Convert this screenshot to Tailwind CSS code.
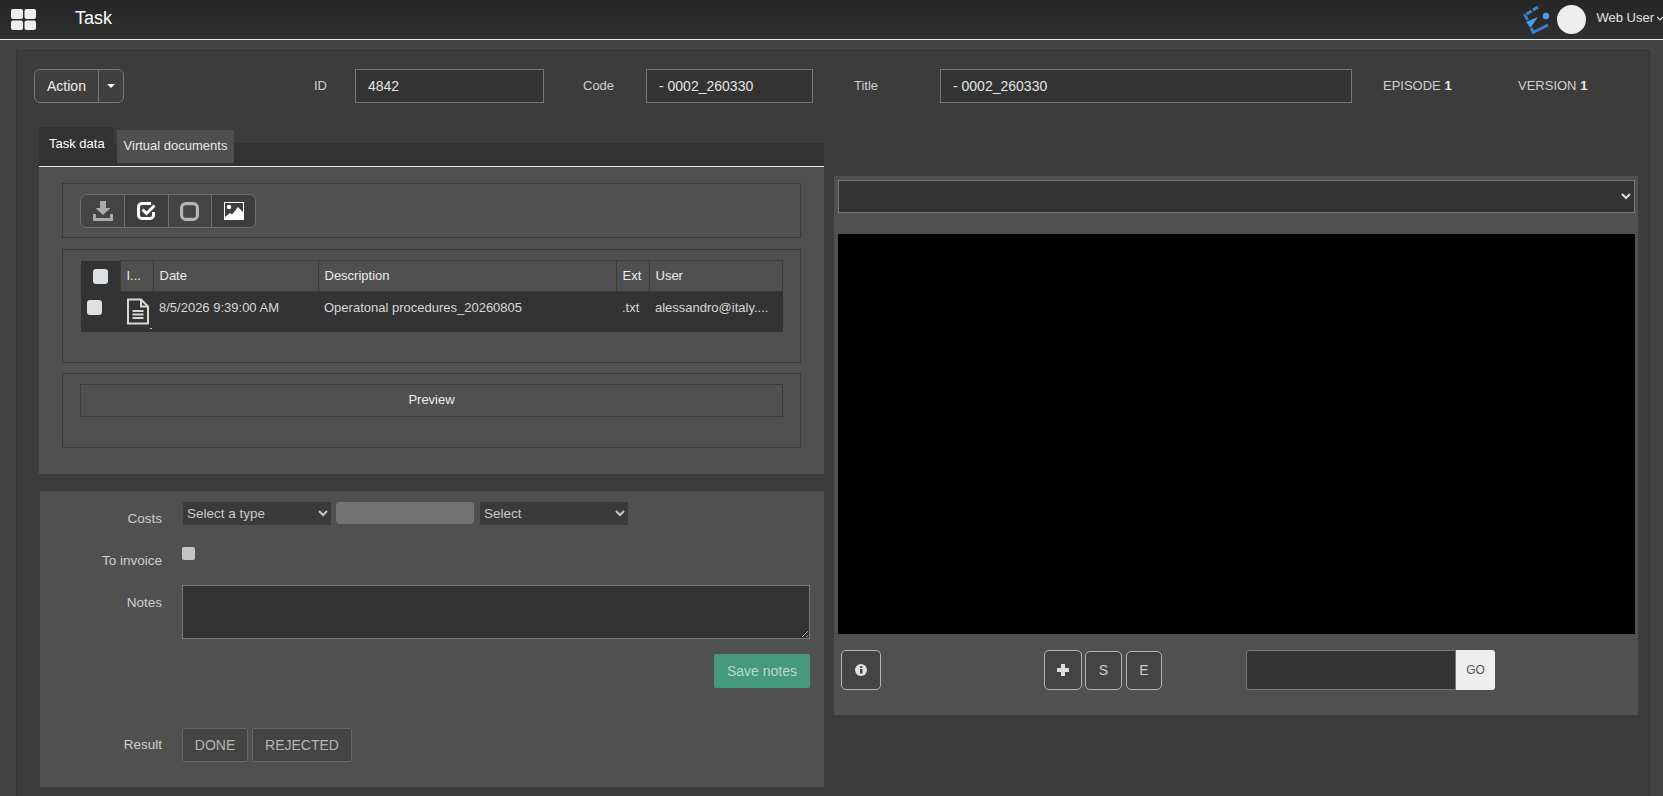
<!DOCTYPE html>
<html lang="en">
<head>
    <meta charset="UTF-8">
    <meta name="viewport" content="width=device-width, initial-scale=1.0">
    <title>Task</title>
    <script src="https://cdn.jsdelivr.net/npm/@tailwindcss/browser@4"></script>
</head>
<body class="w-[1663px] h-[796px] overflow-hidden bg-[#434343] font-['Liberation_Sans',Arial,sans-serif] text-[14px] text-[#dcdcdc]">
    <!-- top bar -->
    <header class="h-[40px] flex items-center bg-gradient-to-b from-[#262626] to-[#303030] border-b border-[#e8e8e8] relative">
        <svg class="ml-[11px] w-[25px] h-[21px]" viewBox="0 0 25 21" fill="#eeeeee">
            <rect x="0" y="0" width="12" height="10" rx="2"/>
            <rect x="13.500" y="0" width="11.500" height="10" rx="2"/>
            <rect x="0" y="11.500" width="12" height="9.500" rx="2"/>
            <rect x="13.500" y="11.500" width="11.500" height="9.500" rx="2"/>
        </svg>
        <span class="ml-[39px] mt-[-2px] text-[18px] text-white">Task</span>
        <div class="ml-auto flex items-center whitespace-nowrap">
            <svg class="w-[28px] h-[31px] mt-[-1px]" viewBox="0 0 28 31">
                <path d="M15 3 L2 11 L8 23" fill="none" stroke="#3f7fc4" stroke-width="3" stroke-dasharray="6 1.500"/>
                <path d="M9 29 L25 21" fill="none" stroke="#3f7fc4" stroke-width="3"/>
                <path d="M8 24 L11 29" fill="none" stroke="#3f7fc4" stroke-width="3"/>
                <path d="M3 18 L15 13 L8 23 Z" fill="#4a9fe8"/>
                <circle cx="23" cy="12" r="3.200" fill="#4a9fe8"/>
            </svg>
            <div class="ml-[6px] w-[29px] h-[29px] rounded-full bg-[#eeeeee]"></div>
            <span class="ml-[10px] mt-[-4px] text-[13px] text-[#e2e2e2]">Web User</span>
            <svg class="ml-[3px] mt-[-3px] w-[6px] h-[5px]" viewBox="0 0 6 5"><path d="M0 1 L3 4 L6 1" fill="none" stroke="#dddddd" stroke-width="1.200"/></svg>
        </div>
    </header>

    <!-- page frame -->
    <main class="mt-[10px] ml-[16px] w-[1634px] h-[760px] bg-[#3c3c3c] border border-[#333333] pl-[17px] pt-[18px]">
        <!-- title row -->
        <div class="flex items-center h-[34px] text-[13px] text-[#cfcfcf]">
            <div class="w-[90px] h-[34px] flex border border-[#777777] rounded-[6px] bg-[#3f3f3f] text-[#f0f0f0]">
                <span class="w-[63px] flex items-center justify-center text-[14px]">Action</span>
                <span class="flex-1 border-l border-[#777777] flex items-center justify-center">
                    <span class="border-x-[4px] border-x-transparent border-t-[4px] border-t-white"></span>
                </span>
            </div>
            <span class="ml-[190px] w-[41px]">ID</span>
            <input class="w-[189px] h-[34px] bg-[#333333] border border-[#777777] px-[12px] text-[14px] text-[#e4e4e4]" value="4842">
            <span class="ml-[39px] w-[63px]">Code</span>
            <input class="w-[167px] h-[34px] bg-[#333333] border border-[#777777] px-[12px] text-[14px] text-[#e4e4e4]" value="- 0002_260330">
            <span class="ml-[41px] w-[86px]">Title</span>
            <input class="w-[412px] h-[34px] bg-[#333333] border border-[#777777] px-[12px] text-[14px] text-[#e4e4e4]" value="- 0002_260330">
            <span class="ml-[31px] w-[135px]">EPISODE <b class="text-[#e8e8e8]">1</b></span>
            <span>VERSION <b class="text-[#e8e8e8]">1</b></span>
        </div>

        <div class="flex mt-[24px]">
            <!-- left column -->
            <div class="w-[790px] flex flex-col items-end">
                <div class="w-[785px] relative">
                    <div class="h-[40px] flex items-end bg-gradient-to-b from-transparent from-[42%] to-[#333333] to-[42%] border-b border-[#e8e8e8]">
                        <div class="w-[75px] h-[39px] bg-[#333333] rounded-t-[3px] pl-[10px] pt-[6px] text-[13px] leading-[22px] text-white">Task data</div>
                        <div class="ml-[3px] mb-[3px] w-[117px] h-[33px] bg-[#4f4f4f] pb-[2px] flex items-center justify-center text-[13px] text-[#e8e8e8]">Virtual documents</div>
                    </div>
                    <section class="h-[307px] bg-[#505050] pt-[16px] pl-[23px]">
                        <fieldset class="w-[739px] h-[55px] border border-[#3a3a3a] pl-[17px] pt-[10px]">
                            <div class="w-[176px] h-[34px] flex border border-[#6f6f6f] rounded-[7px] bg-[#444444] overflow-hidden">
                                <span class="w-[43px] flex items-center justify-center">
                                    <svg class="w-[20px] h-[20px]" viewBox="0 0 20 20" fill="#aaaaaa"><path d="M7 0h6v7h4.500L10 14 2.500 7H7z"/><path d="M0 13h3v4h14v-4h3v7H0z"/></svg>
                                </span>
                                <span class="w-[44px] flex items-center justify-center border-l border-[#6f6f6f] bg-[#3d3d3d]">
                                    <svg class="w-[20px] h-[18px]" viewBox="0 0 20 18" fill="none"><path d="M14 1.500H5a3.500 3.500 0 0 0-3.500 3.500v8A3.500 3.500 0 0 0 5 16.500h8a3.500 3.500 0 0 0 3.500-3.500v-3" stroke="#ffffff" stroke-width="3"/><path d="M5.500 7.500l4 4 8-8" stroke="#ffffff" stroke-width="3"/></svg>
                                </span>
                                <span class="w-[43px] pr-[2px] flex items-center justify-center border-l border-[#6f6f6f]">
                                    <svg class="w-[19px] h-[19px]" viewBox="0 0 18 18" fill="none"><rect x="1.500" y="1.500" width="15" height="15" rx="4" stroke="#b5b5b5" stroke-width="3"/></svg>
                                </span>
                                <span class="flex-1 flex items-center justify-center border-l border-[#6f6f6f] bg-[#3d3d3d]">
                                    <svg class="w-[20px] h-[18px]" viewBox="0 0 20 18"><rect width="20" height="18" fill="#ffffff"/><rect x="1" y="1" width="18" height="16" fill="#3d3d3d"/><circle cx="5" cy="5" r="2.200" fill="#ffffff"/><path d="M1 15l5-4 2 1.500L14 5l5 5v7H1z" fill="#ffffff"/></svg>
                                </span>
                            </div>
                        </fieldset>

                        <fieldset class="mt-[11px] w-[739px] h-[114px] border border-[#3a3a3a] pl-[18px] pt-[10px]">
                            <table class="w-[702px] table-fixed border-collapse text-[13px]">
                                <thead class="text-[#ececec]">
                                    <tr class="h-[31px] bg-[#505050]">
                                        <th class="w-[39px] bg-[#333333] p-0">
                                            <span class="block ml-[12px] w-[15px] h-[15px] rounded-[3px] bg-[#dde1e3]"></span>
                                        </th>
                                        <th class="w-[33px] border border-[#3a3a3a] pl-[6px] text-left font-normal">I...</th>
                                        <th class="w-[165px] border border-[#3a3a3a] pl-[6px] text-left font-normal">Date</th>
                                        <th class="w-[298px] border border-[#3a3a3a] pl-[6px] text-left font-normal">Description</th>
                                        <th class="w-[33px] border border-[#3a3a3a] pl-[6px] text-left font-normal">Ext</th>
                                        <th class="border border-[#3a3a3a] pl-[6px] text-left font-normal">User</th>
                                    </tr>
                                </thead>
                                <tbody class="text-[#d8d8d8]">
                                    <tr class="h-[40px] bg-[#333333] align-top">
                                        <td class="p-0 pl-[6px] pt-[8px]"><span class="block w-[15px] h-[15px] rounded-[3px] bg-[#dde1e3]"></span></td>
                                        <td class="p-0 pl-[6px] pt-[6px]">
                                            <svg class="block w-[24px] h-[27px]" viewBox="0 0 24 27" fill="none" stroke="#d8d8d8" stroke-width="2"><path d="M2 1.500h13l7 7v17H2z"/><path d="M15 1.500v7h7"/><path d="M6.500 13h11M6.500 16.500h11M6.500 20h11" stroke-width="1.800"/></svg>
                                            <span class="block ml-[24px] mt-[3px] w-[2px] h-[1px] bg-[#cccccc]"></span>
                                        </td>
                                        <td class="p-0 pl-[6px] pt-[6px]">8/5/2026 9:39:00 AM</td>
                                        <td class="p-0 pl-[6px] pt-[6px]">Operatonal procedures_20260805</td>
                                        <td class="p-0 pl-[6px] pt-[6px]">.txt</td>
                                        <td class="p-0 pl-[6px] pt-[6px] whitespace-nowrap overflow-hidden">alessandro@italy....</td>
                                    </tr>
                                </tbody>
                            </table>
                        </fieldset>

                        <fieldset class="mt-[10px] w-[739px] h-[75px] border border-[#3a3a3a] pl-[17px] pt-[10px]">
                            <button class="w-[703px] h-[33px] pb-[2px] border border-[#3a3a3a] text-center text-[13px] text-[#ececec]">Preview</button>
                        </fieldset>
                    </section>
                </div>

                <!-- costs / notes form -->
                <section class="mt-[17px] w-[784px] h-[296px] bg-[#505050] text-[#cfcfcf] text-[13.500px] relative">
                    <div class="flex pt-[11px] h-[56px]">
                        <label class="w-[122px] text-right pt-[7px]">Costs</label>
                        <select class="ml-[21px] w-[148px] h-[23px] bg-[#3a3a3a] text-[#c9c9c9] text-[13.500px]"><option>Select a type</option></select>
                        <input class="ml-[5px] w-[138px] h-[22px] rounded-[4px] bg-[#727272]">
                        <select class="ml-[6px] w-[148px] h-[23px] bg-[#3a3a3a] text-[#c9c9c9] text-[13.500px]"><option>Select</option></select>
                    </div>
                    <div class="flex h-[38px]">
                        <label class="w-[122px] text-right pt-[4px]">To invoice</label>
                        <span class="ml-[20px] w-[13px] h-[13px] rounded-[2px] bg-[#c4c4c4]"></span>
                    </div>
                    <div class="flex">
                        <label class="w-[122px] text-right pt-[8px]">Notes</label>
                        <textarea class="ml-[20px] w-[628px] h-[54px] bg-[#333333] border border-[#777777]"></textarea>
                    </div>
                    <div class="flex justify-end pr-[14px] mt-[15px]">
                        <button class="w-[96px] h-[34px] rounded-[2px] bg-[#459a7e] text-[14px] text-[#b8d8cc]">Save notes</button>
                    </div>
                    <div class="flex items-center mt-[40px]">
                        <label class="w-[122px] text-right">Result</label>
                        <button class="ml-[20px] w-[66px] h-[34px] border border-[#666666] rounded-[2px] bg-[#444444] text-[14px] text-[#b5b5b5]">DONE</button>
                        <button class="ml-[4px] w-[100px] h-[34px] border border-[#666666] rounded-[2px] bg-[#444444] text-[14px] text-[#b5b5b5]">REJECTED</button>
                    </div>
                </section>
            </div>

            <!-- player column -->
            <section class="ml-[10px] mt-[49px] w-[804px] h-[539px] bg-[#505050] px-[4px] pt-[4px]">
                <select class="w-[797px] h-[33px] bg-[#333333] border border-[#777777] text-[#dddddd]"></select>
                <div class="mt-[21px] w-[797px] h-[400px] bg-black"></div>
                <div class="flex mt-[16px] text-[14px] text-[#d0d0d0]">
                    <button class="ml-[3px] w-[40px] h-[40px] border border-[#b5b5b5] rounded-[5px] bg-[#444444] flex items-center justify-center">
                        <svg class="w-[12px] h-[12px]" viewBox="0 0 12 12"><circle cx="6" cy="6" r="6" fill="#e0e0e0"/><rect x="5" y="5" width="2.400" height="4.500" fill="#444444"/><rect x="5" y="2.200" width="2.400" height="1.800" fill="#444444"/></svg>
                    </button>
                    <button class="ml-[163px] w-[38px] h-[40px] border border-[#b5b5b5] rounded-[5px] bg-[#444444] flex items-center justify-center">
                        <svg class="w-[12px] h-[12px]" viewBox="0 0 12 12"><path d="M4 0h4v4h4v4H8v4H4V8H0V4h4z" fill="#e0e0e0"/></svg>
                    </button>
                    <button class="ml-[3px] mt-[1px] w-[37px] h-[39px] border border-[#b5b5b5] rounded-[5px] bg-[#444444]">S</button>
                    <button class="ml-[4px] mt-[1px] w-[36px] h-[39px] border border-[#b5b5b5] rounded-[5px] bg-[#444444]">E</button>
                    <input class="ml-[84px] w-[210px] h-[40px] bg-[#333333] border border-[#777777] rounded-l-[3px]">
                    <button class="w-[39px] h-[40px] bg-[#eeeeee] rounded-r-[3px] text-[12px] text-[#555555]">GO</button>
                </div>
            </section>
        </div>
    </main>
</body>
</html>
